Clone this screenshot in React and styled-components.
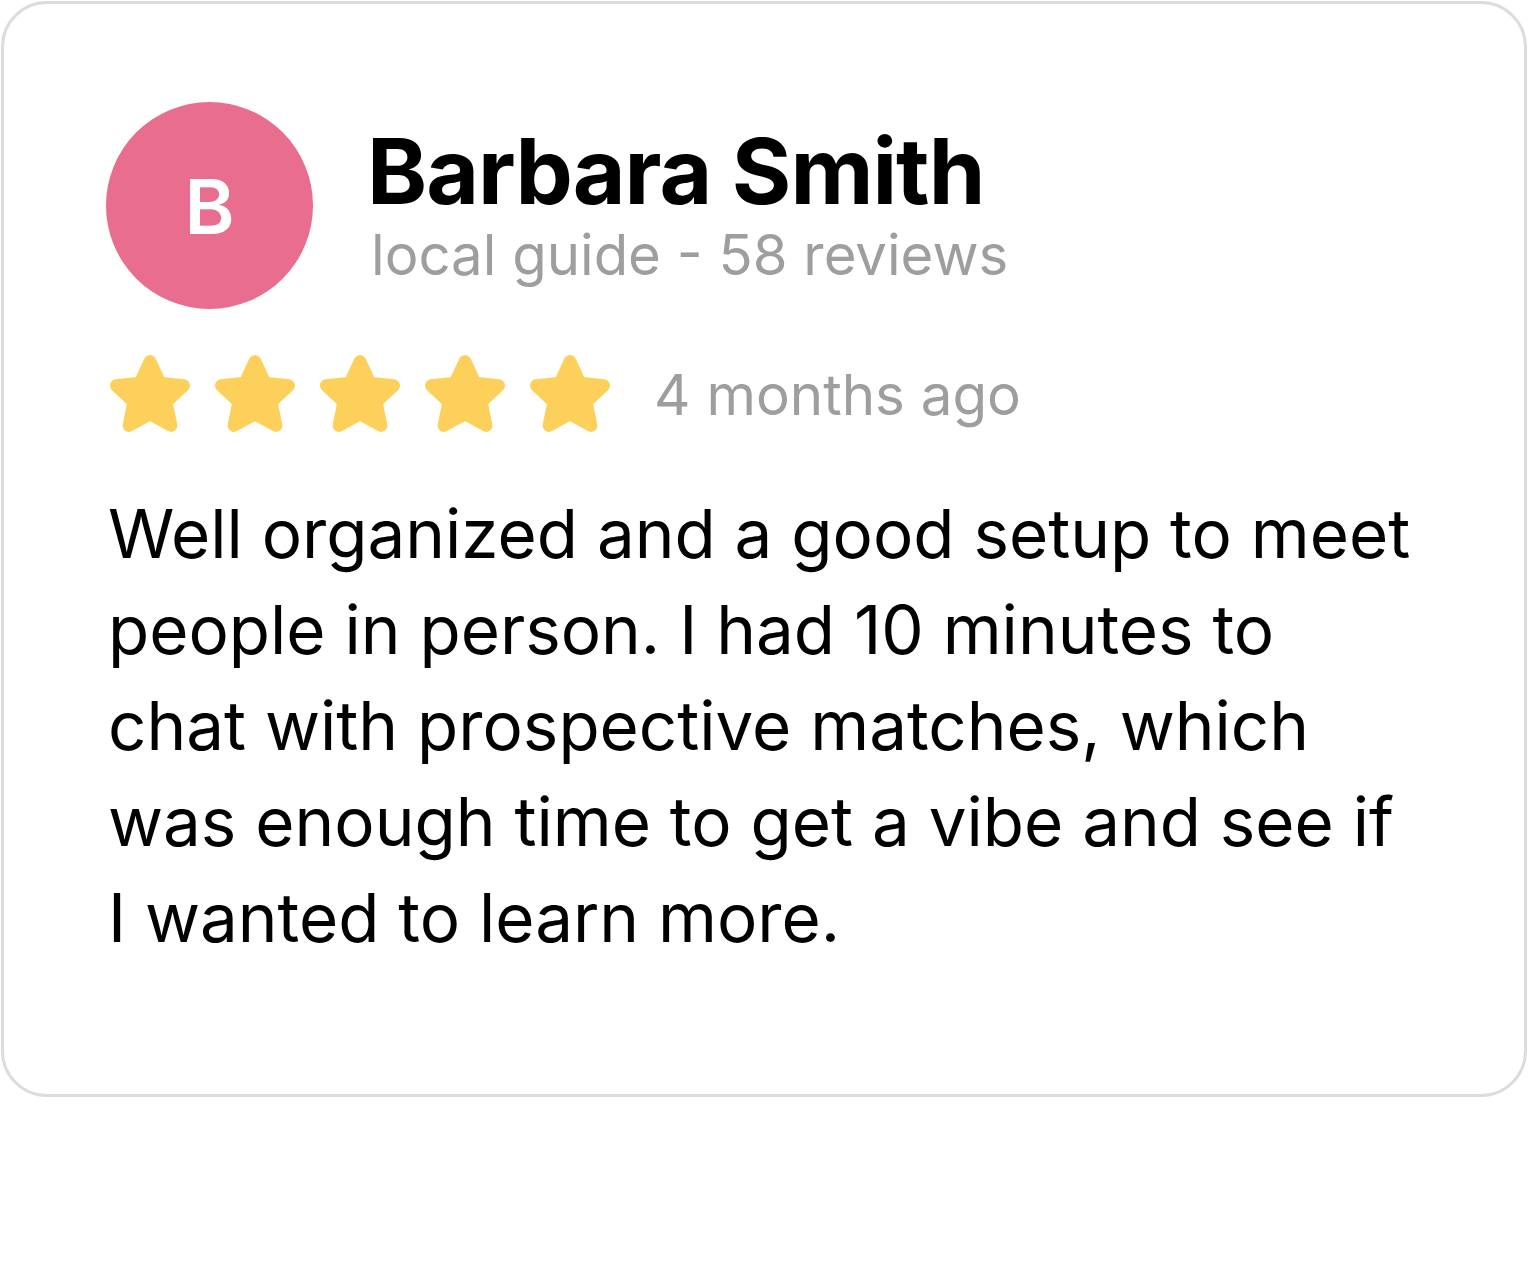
import React from "react";
import styled, { createGlobalStyle } from "styled-components";

const Global = createGlobalStyle`
  html, body { margin: 0; padding: 0; background: #ffffff; }
  body { font-family: Inter, "Noto Sans", sans-serif; }
`;

const Page = styled.div`
  padding: 1px;
  width: 1528px;
  box-sizing: border-box;
`;

const Card = styled.section`
  box-sizing: border-box;
  width: 1526px;
  height: 1096px;
  border: 3px solid #dcdcdc;
  border-radius: 46px;
  background: #fff;
  padding: 98px 60px 0 102px;
`;

const Header = styled.div`
  display: flex;
  align-items: center;
  gap: 54px;
`;

const Avatar = styled.div`
  width: 207px;
  height: 207px;
  border-radius: 50%;
  background: #e86d8e;
  color: #fff;
  display: flex;
  align-items: center;
  justify-content: center;
  font-family: Inter, sans-serif;
  font-weight: 600;
  font-size: 76px;
  flex-shrink: 0;
`;

const Who = styled.div`
  display: flex;
  flex-direction: column;
  margin-top: 2px;
`;

const Name = styled.h2`
  margin: 0;
  font-family: Inter, sans-serif;
  font-weight: 700;
  font-size: 91px;
  line-height: 96px;
  color: #000;
  letter-spacing: -1px;
`;

const Sub = styled.div`
  margin-left: 4px;
  font-family: Inter, sans-serif;
  font-weight: 400;
  font-size: 56.3px;
  line-height: 72px;
  color: #9e9e9e;
`;

const RatingRow = styled.div`
  display: flex;
  align-items: center;
  margin-top: 46px;
`;

const Stars = styled.div`
  display: flex;
  gap: 25px;
  margin-left: 4px;
`;

const Ago = styled.span`
  margin-left: 44px;
  font-family: Inter, sans-serif;
  font-size: 56.5px;
  color: #9e9e9e;
`;

const Body = styled.p`
  margin: 53px 0 0 2px;
  font-family: Inter, sans-serif;
  font-weight: 400;
  font-size: 67.3px;
  line-height: 96px;
  color: #000;
  white-space: nowrap;
`;

const Star = () => (
  <svg width="80" height="78" viewBox="2 2 76 74">
    <path
      d="M40 8 L49.5 28.5 L72 31 L55.5 46.5 L60 69 L40 58 L20 69 L24.5 46.5 L8 31 L30.5 28.5 Z"
      fill="#fdd05b"
      stroke="#fdd05b"
      strokeWidth="12"
      strokeLinejoin="round"
    />
  </svg>
);

export default function App() {
  return (
    <>
      <Global />
      <Page>
        <Card>
          <Header>
            <Avatar>B</Avatar>
            <Who>
              <Name>Barbara Smith</Name>
              <Sub>local guide - 58 reviews</Sub>
            </Who>
          </Header>
          <RatingRow>
            <Stars>
              {[0, 1, 2, 3, 4].map((i) => (
                <Star key={i} />
              ))}
            </Stars>
            <Ago>4 months ago</Ago>
          </RatingRow>
          <Body>
            Well organized and a good setup to meet
            <br />
            people in person. I had 10 minutes to
            <br />
            chat with prospective matches, which
            <br />
            was enough time to get a vibe and see if
            <br />I wanted to learn more.
          </Body>
        </Card>
      </Page>
    </>
  );
}
